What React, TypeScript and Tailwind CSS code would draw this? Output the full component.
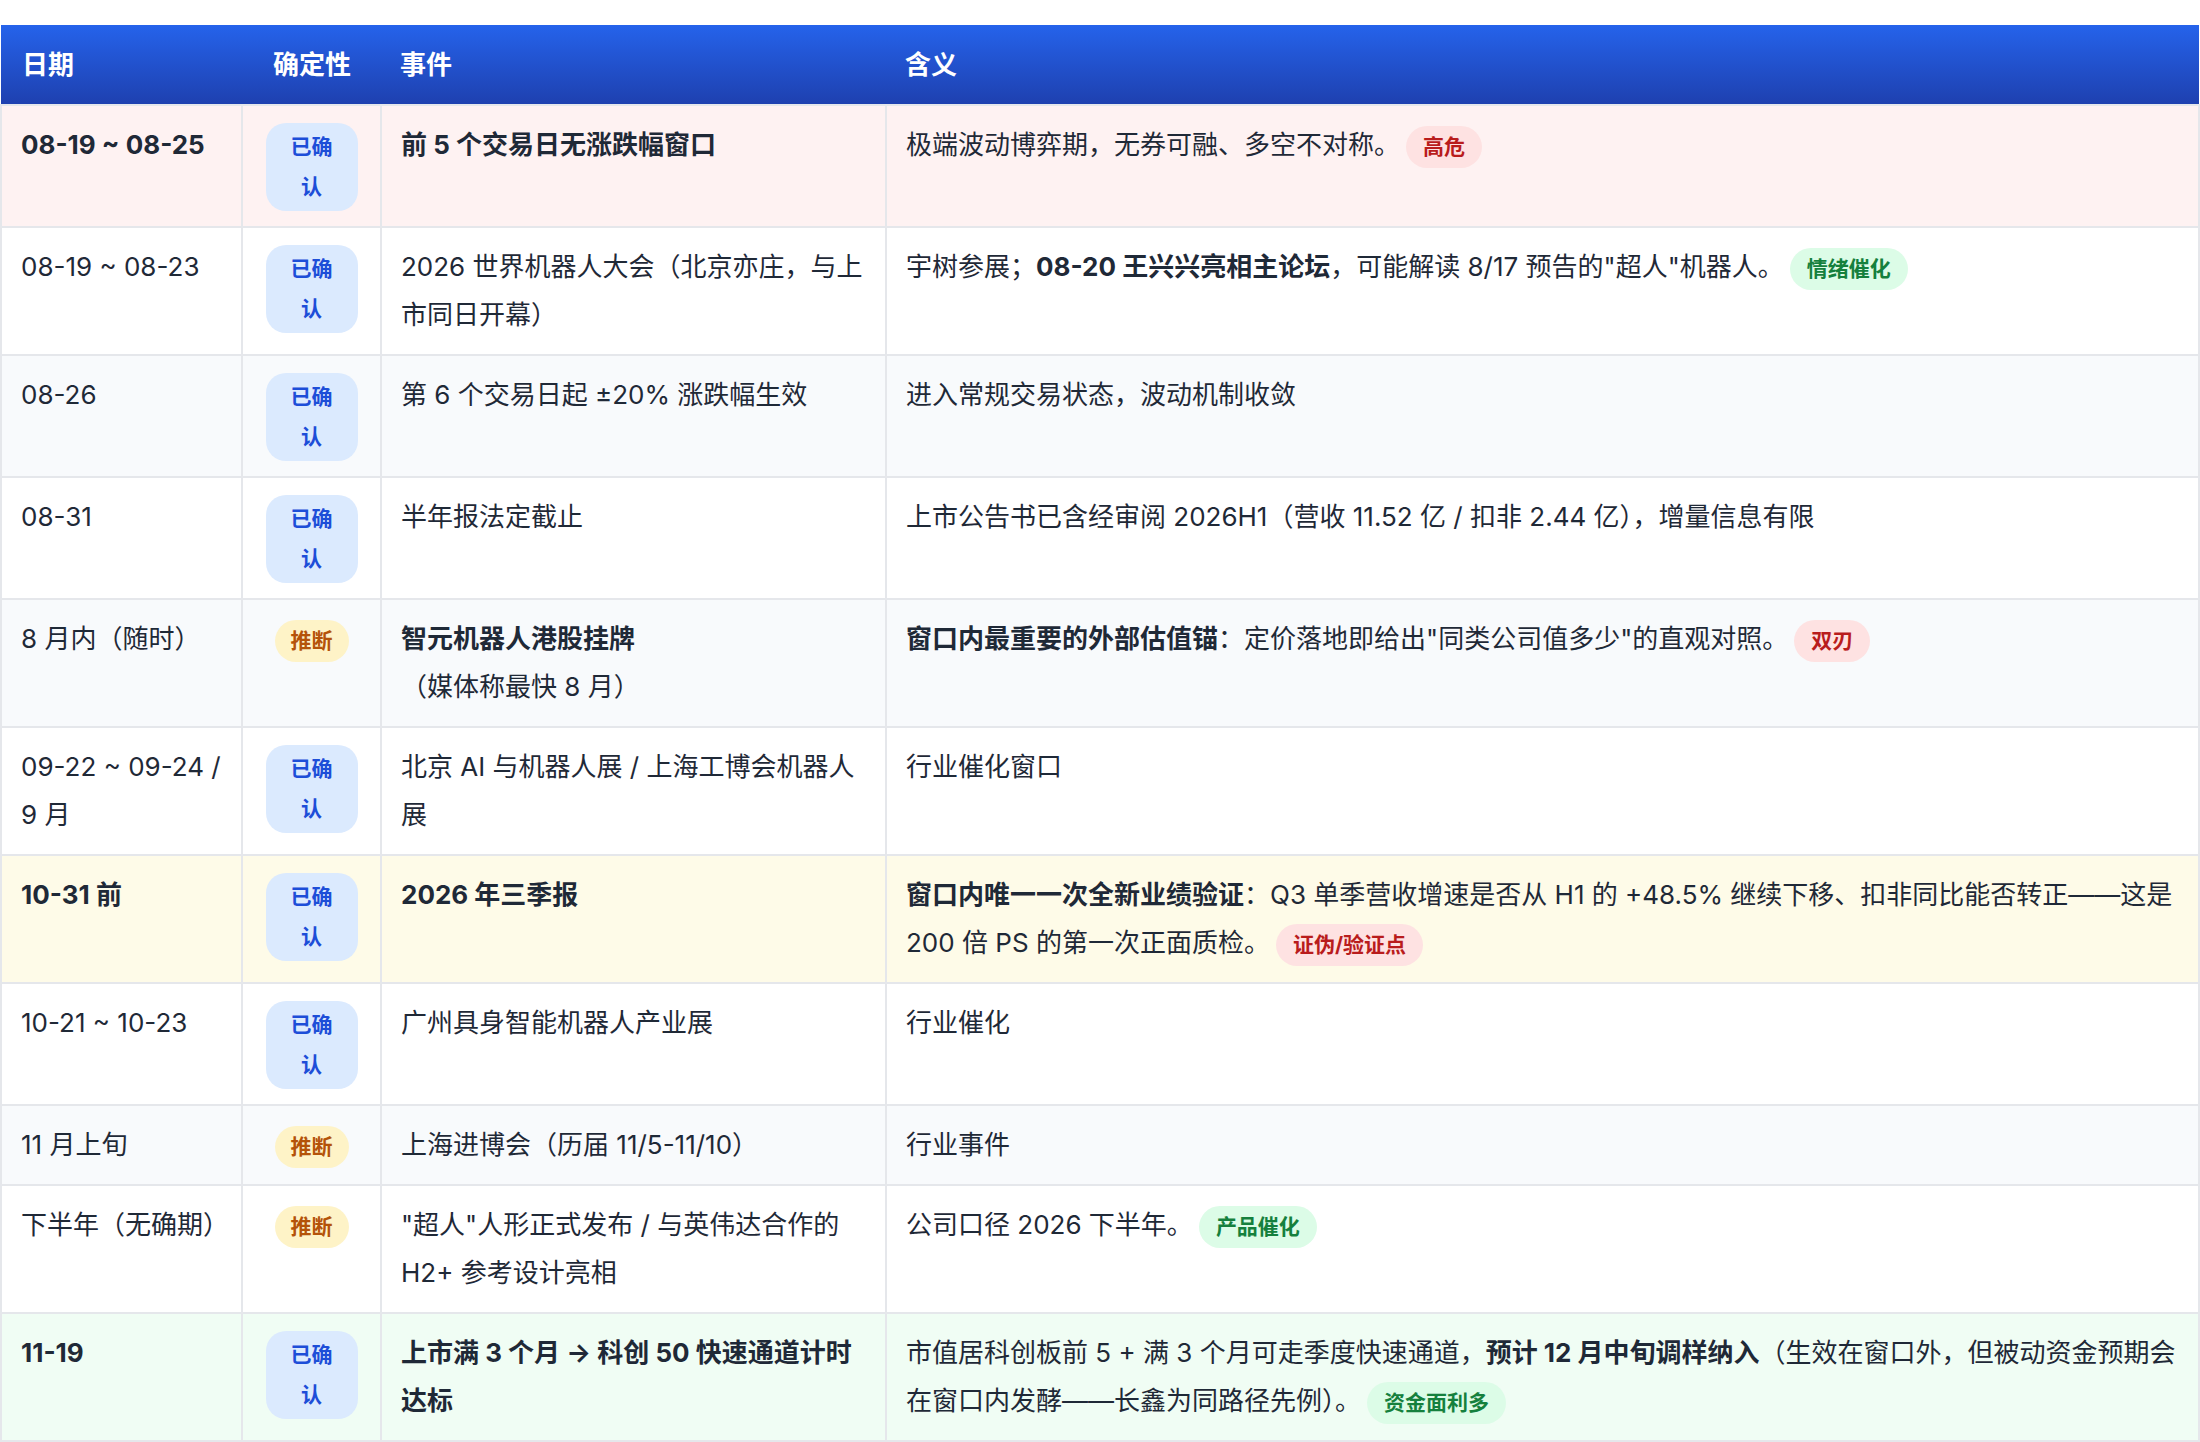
import React from "react";

type Tone = "red" | "green";
const Tag = ({ t, tone }: { t: string; tone: Tone }) => (
  <span
    className={`inline-block align-middle ml-[6px] px-[17px] rounded-full text-[21px] font-bold leading-[42px] ${
      tone === "red" ? "bg-[#fee2e2] text-[#b91c1c]" : "bg-[#dcfce7] text-[#15803d]"
    }`}
  >
    {t}
  </span>
);

const Confirmed = () => (
  <span className="inline-flex flex-col items-center w-[92px] py-[4px] rounded-[20px] bg-[#dbeafe] text-[#1d4ed8] text-[21px] font-bold leading-[40px]">
    <span>已确</span>
    <span>认</span>
  </span>
);
const Inferred = () => (
  <span className="inline-block px-[16px] rounded-full bg-[#fef3c7] text-[#b45309] text-[21px] font-bold leading-[42px]">
    推断
  </span>
);

type Row = {
  bg: string;
  date: React.ReactNode;
  c: "y" | "n";
  ev: React.ReactNode;
  mean: React.ReactNode;
};

const rows: Row[] = [
  {
    bg: "bg-[#fef2f2]",
    date: <b>08-19 ~ 08-25</b>,
    c: "y",
    ev: <b>前 5 个交易日无涨跌幅窗口</b>,
    mean: <>极端波动博弈期，无券可融、多空不对称。<Tag t="高危" tone="red" /></>,
  },
  {
    bg: "bg-white",
    date: "08-19 ~ 08-23",
    c: "y",
    ev: "2026 世界机器人大会（北京亦庄，与上市同日开幕）",
    mean: <>宇树参展；<b>08-20 王兴兴亮相主论坛</b>，可能解读 8/17 预告的"超人"机器人。<Tag t="情绪催化" tone="green" /></>,
  },
  { bg: "bg-[#f8fafc]", date: "08-26", c: "y", ev: "第 6 个交易日起 ±20% 涨跌幅生效", mean: "进入常规交易状态，波动机制收敛" },
  {
    bg: "bg-white",
    date: "08-31",
    c: "y",
    ev: "半年报法定截止",
    mean: "上市公告书已含经审阅 2026H1（营收 11.52 亿 / 扣非 2.44 亿），增量信息有限",
  },
  {
    bg: "bg-[#f8fafc]",
    date: "8 月内（随时）",
    c: "n",
    ev: <><b>智元机器人港股挂牌</b><br />（媒体称最快 8 月）</>,
    mean: <><b>窗口内最重要的外部估值锚</b>：定价落地即给出"同类公司值多少"的直观对照。<Tag t="双刃" tone="red" /></>,
  },
  { bg: "bg-white", date: "09-22 ~ 09-24 / 9 月", c: "y", ev: "北京 AI 与机器人展 / 上海工博会机器人展", mean: "行业催化窗口" },
  {
    bg: "bg-[#fefbe8]",
    date: <b>10-31 前</b>,
    c: "y",
    ev: <b>2026 年三季报</b>,
    mean: <><b>窗口内唯一一次全新业绩验证</b>：Q3 单季营收增速是否从 H1 的 +48.5% 继续下移、扣非同比能否转正——这是 200 倍 PS 的第一次正面质检。<Tag t="证伪/验证点" tone="red" /></>,
  },
  { bg: "bg-white", date: "10-21 ~ 10-23", c: "y", ev: "广州具身智能机器人产业展", mean: "行业催化" },
  { bg: "bg-[#f8fafc]", date: "11 月上旬", c: "n", ev: "上海进博会（历届 11/5-11/10）", mean: "行业事件" },
  {
    bg: "bg-white",
    date: "下半年（无确期）",
    c: "n",
    ev: '"超人"人形正式发布 / 与英伟达合作的 H2+ 参考设计亮相',
    mean: <>公司口径 2026 下半年。<Tag t="产品催化" tone="green" /></>,
  },
  {
    bg: "bg-[#f0fdf4]",
    date: <b>11-19</b>,
    c: "y",
    ev: <b>上市满 3 个月 → 科创 50 快速通道计时达标</b>,
    mean: <>市值居科创板前 5 + 满 3 个月可走季度快速通道，<b>预计 12 月中旬调样纳入</b>（生效在窗口外，但被动资金预期会在窗口内发酵——长鑫为同路径先例）。<Tag t="资金面利多" tone="green" /></>,
  },
];

export default function App() {
  const cell = "border-2 border-[#e5e7eb] px-[19px] py-[15px] align-top";
  return (
    <div
      className="w-[2200px] h-[1442px] bg-white pt-[25px] text-[#1f2937] text-[26px] leading-[48px]"
      style={{ fontFamily: 'Inter, "Noto Sans CJK SC", sans-serif' }}
    >
      <table className="w-[2200px] border-collapse table-fixed">
        <colgroup>
          <col className="w-[241px]" />
          <col className="w-[139px]" />
          <col className="w-[505px]" />
          <col />
        </colgroup>
        <thead>
          <tr className="bg-gradient-to-b from-[#2563eb] to-[#1e40af] text-white font-bold text-left">
            <th className="h-[80px] px-[21px]">日期</th>
            <th className="h-[80px] pl-[31px]">确定性</th>
            <th className="h-[80px] px-[19px]">事件</th>
            <th className="h-[80px] px-[19px]">含义</th>
          </tr>
        </thead>
        <tbody>
          {rows.map((r, i) => (
            <tr key={i} className={r.bg}>
              <td className={cell}>{r.date}</td>
              <td className={`${cell} text-center !px-[12px]`}>{r.c === "y" ? <Confirmed /> : <Inferred />}</td>
              <td className={cell}>{r.ev}</td>
              <td className={cell}>{r.mean}</td>
            </tr>
          ))}
        </tbody>
      </table>
    </div>
  );
}
